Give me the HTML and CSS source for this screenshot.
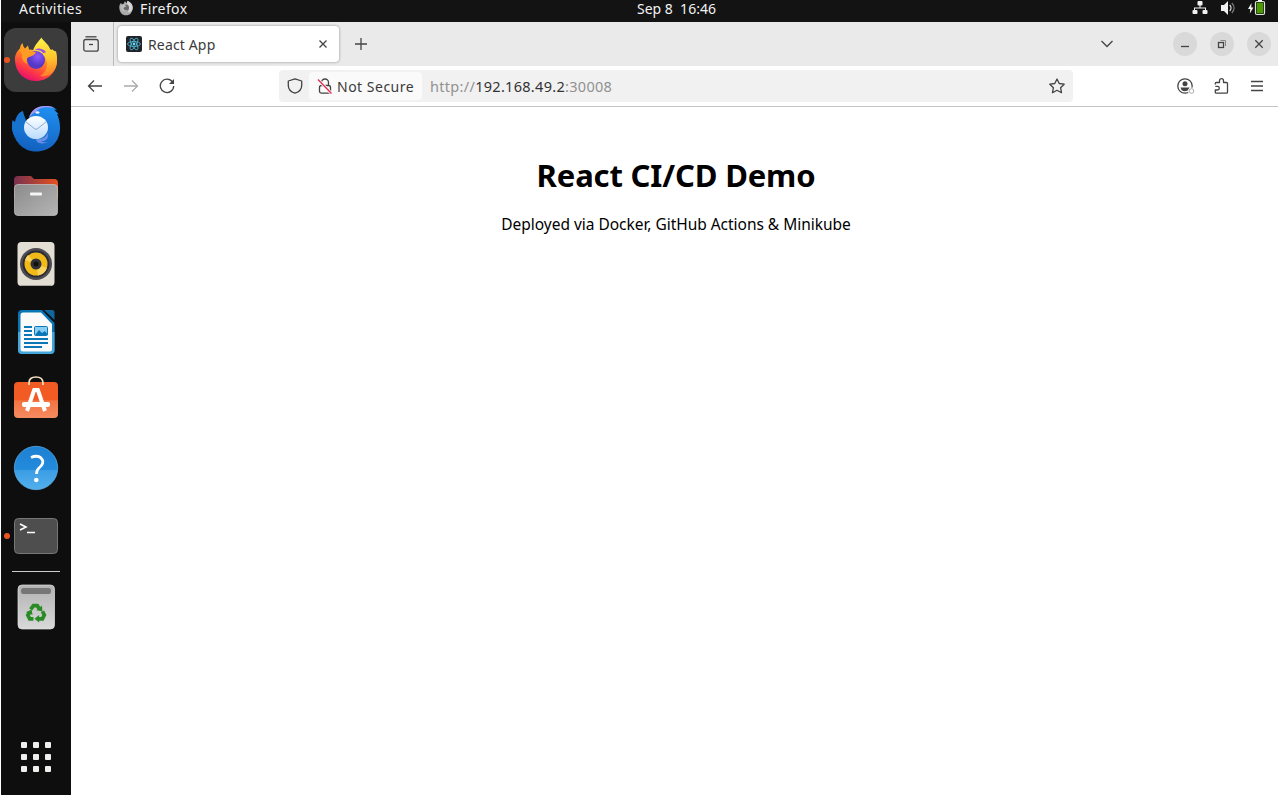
FILE: index.html
```html
<!DOCTYPE html>
<html lang="en">
<head>
<meta charset="utf-8">
<title>React App</title>
<link rel="stylesheet" href="styles.css">
</head>
<body>
<div class="desktop">
  <header class="topbar">
    <span class="activities">Activities</span>
    <span class="app-menu">
      <svg width="16" height="16" viewBox="0 0 48 48"><path fill="#aaa" d="M4 24C3 17 6 12 9 9l2 5 5-2 5-8 5 6 3-8c8 5 15 10 15 21C44 36 36 46 24 46S5 37 4 24Z"/><path fill="#d5d5d5" d="M29 2c8 5 15 10 15 21 0 8-7 15-15 14 7-8 4-22-3-27Z"/><circle cx="24" cy="23" r="9" fill="#686868"/><path fill="#bbb" d="M9 9l2 5 7-1 7 6-9 5c2 7 8 9 14 6-8 9-23 2-22-9Z"/></svg>
      <span class="app-name">Firefox</span>
    </span>
    <time class="clock">Sep 8&nbsp; 16:46</time>
    <div class="status">
      <svg width="16" height="16" viewBox="0 0 16 16" fill="#f2f2f2"><rect x="5.500" y="1" width="5" height="4.500" rx="1"/><rect x=".5" y="10" width="5" height="4" rx="1"/><rect x="10.500" y="10" width="5" height="4" rx="1"/><path d="M7.500 5h1v2.500H14V10h-1V8.500H3V10H2V7.500h5.500Z"/></svg>
      <svg width="16" height="16" viewBox="0 0 16 16"><path fill="#f2f2f2" d="M1 5h3l4-4v14l-4-4H1Z"/><path fill="none" stroke="#ddd" stroke-width="1.300" d="M9.700 5c1.700 1.700 1.700 4.300 0 6"/><path fill="none" stroke="#777" stroke-width="1.300" d="M11.800 3c3 3 3 7 0 10"/></svg>
      <svg width="18" height="16" viewBox="0 0 18 16"><path fill="#f2f2f2" d="M3.500 3 0 9h2.300l-.5 4.500L5.500 7.500H3.300Z"/><rect x="7.500" y="1.500" width="9" height="13" rx="1.500" fill="#4e9a06" stroke="#f2f2f2" stroke-width="1.200"/><path stroke="#111" stroke-width=".7" fill="none" d="M8.400 2.400h7.200v11.200H8.400Z"/><path fill="#f2f2f2" d="M10 0h4v2h-4Z"/></svg>
    </div>
  </header>
  <div class="workspace">
    <nav class="dock">
      <div class="dock-item active running">
        <svg width="48" height="48" viewBox="0 0 48 48">
          <defs>
            <linearGradient id="ff" x1=".8" y1=".1" x2=".3" y2="1"><stop offset="0" stop-color="#ffe03a"/><stop offset=".4" stop-color="#ff8a1f"/><stop offset=".72" stop-color="#ff3b45"/><stop offset="1" stop-color="#e30b72"/></linearGradient>
            <linearGradient id="fy" x1=".5" y1="0" x2=".6" y2="1"><stop offset="0" stop-color="#fff34a"/><stop offset=".55" stop-color="#ffc42c"/><stop offset="1" stop-color="#ff7b2b"/></linearGradient>
            <radialGradient id="fp" cx=".6" cy=".3"><stop offset="0" stop-color="#9059ff"/><stop offset="1" stop-color="#5539c5"/></radialGradient>
          </defs>
          <path fill="url(#ff)" d="M3 25c-.5-6 2-10 5-12.500 0-2 1-4 2.500-5.500.3 2 1 4 2.500 5.500L16 9.500l1 4c4 0 8 1 11 2l8-3 8 3c1 3 1 6 1 9C45 36 36 45 24 45S4 37 3 25Z"/>
          <path fill="url(#fy)" d="M29.500 1.500c1 3 8 7 9 13l.5 1.500 1-3C44 17 45 21 45 26c-1 10-9 16-17 14 5-3 8-8 7-14-1-5-5-9-14-11 1-5 5-9 8.500-13.500Z"/>
          <circle cx="24" cy="24" r="9" fill="url(#fp)"/>
          <path fill="#9752eb" d="M20 15c5-2 9-1 11 2l3-.5c-1-3-5-4-8-4Z"/>
          <path fill="#ff9b22" d="M7 13c3-1 7 0 10 3h7c-1 3-4 4-7 5-3 1-3 4-1 7-6-2-6-6-6-10Z"/>
        </svg>
      </div>
      <div class="dock-item">
        <svg width="48" height="48" viewBox="0 0 48 48">
          <defs><linearGradient id="tb" x1=".6" y1="0" x2=".4" y2="1"><stop offset="0" stop-color="#208ff0"/><stop offset="1" stop-color="#1260be"/></linearGradient><linearGradient id="te" x2="0" y2="1"><stop offset="0" stop-color="#fff"/><stop offset="1" stop-color="#b9dcff"/></linearGradient></defs>
          <path fill="#1673ce" d="M0 20c0-2 .5-3 .5-4L3 18c1-6 4-10 8-11 1 6 4 8 3 14L9 39C3 35-1 28 0 20Z"/>
          <path fill="url(#tb)" d="M17 14C19 6 26 2 33 2c5 0 9 1 12 4l-3-.5 5 5-2-.5c2 4 3 9 3 14 0 14-10 23.500-24 23.500C11 47.500 1 37 0 22c4 10 12 5 17-8Z"/>
          <path fill="#a795f5" d="M17 14C19 6 25 2 33 2c4 0 7 0 9 2-9-2-16 0-18 4-3 1-5 3-7 6Z"/>
          <path fill="#6d91e6" d="M24 35c6 1 10-2 12-6 1 6-3 9-8 8 2 1 5 2 8 1-6 3-12 1-12-3Z"/>
          <ellipse cx="24" cy="23.500" rx="12" ry="11.500" fill="url(#te)"/>
          <path d="m14 18 9 7q1 .8 2 0l9-7" fill="none" stroke="#90a9ce" stroke-width="1"/><ellipse cx="25.500" cy="8.500" rx="2" ry="1.200" fill="#e6f4ff"/>
        </svg>
      </div>
      <div class="dock-item">
        <svg width="48" height="48" viewBox="0 0 48 48">
          <defs><linearGradient id="fo"><stop offset="0" stop-color="#77304f"/><stop offset="1" stop-color="#e7521f"/></linearGradient><linearGradient id="fg" x2="1" y2="1"><stop offset="0" stop-color="#8b8b8b"/><stop offset="1" stop-color="#b5b5b5"/></linearGradient></defs>
          <path fill="url(#fo)" d="M2 8q0-4 4-4h13l3 3h20q4 0 4 4v15H2Z"/><rect x="2.500" y="12.500" width="43" height="31" rx="3.500" fill="url(#fg)" stroke="#c7c7c7" stroke-opacity=".7"/><rect x="18" y="20.500" width="12" height="3" rx="1" fill="#f5f5f5"/>
        </svg>
      </div>
      <div class="dock-item">
        <svg width="48" height="48" viewBox="0 0 48 48"><rect x="5.500" y="2" width="37" height="44" rx="4" fill="#e3ded3"/><path d="M9 45.500h30" stroke="#aaa69d"/><circle cx="24" cy="24" r="16" fill="#4f4b52"/><circle cx="24" cy="24" r="13.500" fill="#292b38"/><circle cx="24" cy="24" r="11.500" fill="#f0bb18"/><path fill="#fbd35a" d="m24 24-11-4a11.500 11.500 0 0 1 3-5Zm0 0 11 4a11.500 11.500 0 0 1-9 7.500Z"/><circle cx="24" cy="24" r="5.500" fill="#303136"/><circle cx="24" cy="24" r="2.500" fill="#111"/></svg>
      </div>
      <div class="dock-item">
        <svg width="48" height="48" viewBox="0 0 48 48"><path fill="#0875b5" d="M6 6q0-4 4-4h20l12.500 13v27q0 4-4 4H10q-4 0-4-4Z"/><path fill="#43a5d9" d="M6 24h36.500v18q0 4-4 4H10q-4 0-4-4Z"/><path fill="#fafafa" d="M8.500 7q0-2.500 2.500-2.500h18L40 16v25q0 2.500-2.500 2.500H11q-2.500 0-2.500-2.500Z"/><path fill="#11679b" d="M32 2h8q2.500 0 2.500 2.500V12Z"/><path stroke="#0b77b6" stroke-width="2" d="M12 19h8M12 23h8M12 27h8M12 31h24M12 35h24M12 39h18"/><rect x="22.500" y="18.500" width="13" height="9" rx="1" fill="#8bcdf0" stroke="#087abb"/><path fill="#0875b5" d="m23 27 4-5 3 3 3-2 3 4Z"/></svg>
      </div>
      <div class="dock-item">
        <svg width="48" height="48" viewBox="0 0 48 48"><defs><linearGradient id="so" x2="0" y2="1"><stop offset="0" stop-color="#f35b25"/><stop offset=".5" stop-color="#f35b25"/><stop offset=".52" stop-color="#f27441"/><stop offset="1" stop-color="#f68b60"/></linearGradient></defs><rect x="2" y="6" width="44" height="36" rx="4" fill="url(#so)"/><path d="M17 9V7q0-6 7-6t7 6v2" fill="none" stroke="#f3dec0" stroke-width="1.700"/><path d="m22.500 13-7.500 22M25.500 13l7.500 22" fill="none" stroke="#fff" stroke-width="4"/><path d="M21 12h6v4h-6Z" fill="#fff"/><rect x="10" y="26" width="28" height="5" rx="2" fill="#fff"/></svg>
      </div>
      <div class="dock-item">
        <svg width="48" height="48" viewBox="0 0 48 48"><defs><linearGradient id="he" x2="0" y2="1"><stop offset="0" stop-color="#1e80d2"/><stop offset=".54" stop-color="#238bdc"/><stop offset=".55" stop-color="#3b9de4"/><stop offset="1" stop-color="#52b0ec"/></linearGradient></defs><circle cx="24" cy="24" r="21.700" fill="url(#he)" stroke="#61b5ee" stroke-width=".7"/><path d="M19 13.500q5.500-2.500 9.500 0c4.500 4 1.500 8-1.500 10.500-2 1.700-2.500 3-2.500 6" fill="none" stroke="#fff" stroke-width="2.800"/><circle cx="24.300" cy="36" r="2.300" fill="#fff"/></svg>
      </div>
      <div class="dock-item running">
        <svg width="48" height="48" viewBox="0 0 48 48"><rect x="2.500" y="6.500" width="43" height="35" rx="4" fill="#4e4e4e" stroke="#777"/><path d="m8 12 6 3-6 3M15 20.500h8" fill="none" stroke="#fff" stroke-width="1.600"/></svg>
      </div>
      <div class="dock-divider"></div>
      <div class="dock-item">
        <svg width="48" height="48" viewBox="0 0 48 48"><defs><linearGradient id="tr" x2="0" y2="1"><stop offset="0" stop-color="#b2b2b2"/><stop offset="1" stop-color="#d9d9d9"/></linearGradient></defs><rect x="6" y="2" width="36.500" height="44" rx="4" fill="url(#tr)" stroke="#e1e1e1" stroke-width=".7"/><rect x="9" y="5" width="30" height="6" rx="2.500" fill="#767676"/>
          <g transform="translate(.8 1) scale(.94)"><g fill="none" stroke="#298b25" stroke-width="4"><path d="m19 27 3-4h4l2 3"/><path d="m31.500 29 2 4-2 4H27"/><path d="M22 37h-4l-2-4 2-3"/></g><g fill="#298b25"><path d="m25 28 6-5 .5 6Z"/><path d="m28 33-5 4 5 4Z"/><path d="m14 30 6-3 1 6Z"/></g></g></svg>
      </div>
      <div class="dock-item apps"><svg width="48" height="48" viewBox="0 0 48 48" fill="#efefee"><rect x="9" y="9" width="6" height="6" rx="1"/><rect x="21" y="9" width="6" height="6" rx="1"/><rect x="33" y="9" width="6" height="6" rx="1"/><rect x="9" y="21" width="6" height="6" rx="1"/><rect x="21" y="21" width="6" height="6" rx="1"/><rect x="33" y="21" width="6" height="6" rx="1"/><rect x="9" y="33" width="6" height="6" rx="1"/><rect x="21" y="33" width="6" height="6" rx="1"/><rect x="33" y="33" width="6" height="6" rx="1"/></svg></div>
    </nav>
    <main class="window">
      <div class="tabs">
        <div class="tab-overview"><svg class="line-icon" width="16" height="16" viewBox="0 0 16 16"><path d="M2.500.8h11"/><rect x=".8" y="3.500" width="14.400" height="11.700" rx="2"/><path d="M6 8.500h4"/></svg></div>
        <div class="tab">
          <svg width="16" height="16" viewBox="0 0 16 16"><rect width="16" height="16" rx="2" fill="#20232a"/><g fill="none" stroke="#53bdd6" stroke-width=".8"><ellipse cx="8" cy="8" rx="6.500" ry="2.500"/><ellipse cx="8" cy="8" rx="6.500" ry="2.500" transform="rotate(60 8 8)"/><ellipse cx="8" cy="8" rx="6.500" ry="2.500" transform="rotate(120 8 8)"/></g><circle cx="8" cy="8" r="1.400" fill="#61dafb"/></svg>
          <span class="tab-title">React App</span>
          <svg class="line-icon" width="8" height="8" viewBox="0 0 8 8"><path d="m.5.5 7 7m0-7-7 7"/></svg>
        </div>
        <svg class="line-icon new-tab" width="12" height="12" viewBox="0 0 12 12"><path d="M6 0v12M0 6h12"/></svg>
        <svg class="line-icon tab-list" width="12" height="8" viewBox="0 0 12 8"><path d="m.5 1 5.500 5.500L11.500 1"/></svg>
        <div class="controls">
          <span class="control"><svg class="line-icon" width="12" height="12" viewBox="0 0 12 12"><path d="M2 8.500h8"/></svg></span>
          <span class="control"><svg class="line-icon" width="12" height="12" viewBox="0 0 12 12"><rect x="2.500" y="4.500" width="5" height="5"/><path class="back-pane" d="M4.500 2.500h5V8"/></svg></span>
          <span class="control"><svg class="line-icon" width="12" height="12" viewBox="0 0 12 12"><path d="m2.300 2.300 7.400 7.400m0-7.400-7.400 7.400"/></svg></span>
        </div>
      </div>
      <div class="toolbar">
        <div class="nav-buttons">
          <svg class="line-icon" width="16" height="16" viewBox="0 0 16 16"><path d="M15 8H1.500M7 2.500 1.500 8 7 13.500"/></svg>
          <svg class="line-icon disabled" width="16" height="16" viewBox="0 0 16 16"><path d="M1 8h13.500M9 2.500 14.500 8 9 13.500"/></svg>
          <svg class="line-icon" width="16" height="16" viewBox="0 0 16 16"><path d="M13.500 4A6.700 6.700 0 1 0 14.700 8"/><path fill="#444" stroke="none" d="m15 1v5H10Z"/></svg>
        </div>
        <div class="url-bar">
          <svg class="line-icon shield" width="16" height="16" viewBox="0 0 16 16"><path d="M8 .8 14.700 3v4.500C14.700 11 12 14 8 15.200 4 14 1.300 11 1.300 7.500V3Z" stroke-linejoin="round"/></svg>
          <div class="identity"><svg width="16" height="16" viewBox="0 0 16 16"><g class="line-icon"><rect x="2.500" y="7.500" width="11" height="7.700" rx="2"/><path d="M4.500 7V4.500a3.500 3.500 0 0 1 7 0V7"/></g><path d="m.5 1 14 14.500" stroke="#fafafa" stroke-width="3"/><path d="m1 1.500 13.500 14" stroke="#e22850" stroke-width="1.300"/></svg><span class="insecure">Not Secure</span></div>
          <span class="url">http://<b>192.168.49.2</b>:30008</span>
          <svg class="line-icon star" width="16" height="16" viewBox="0 0 16 16"><path stroke-linejoin="round" d="m8 1 2.200 4.500 5 .7-3.600 3.500.9 5L8 12.300 3.500 14.700l.9-5L.8 6.200l5-.7Z"/></svg>
        </div>
        <div class="actions">
          <svg width="18" height="16" viewBox="0 0 18 16"><circle class="line-icon" cx="8" cy="8" r="7.200"/><circle cx="8" cy="5.700" r="2.500" fill="#444"/><path fill="#444" d="M3.500 9.500h9v1.500q-4 4-8 1Z"/><circle cx="14.500" cy="13" r="3.500" fill="#fff"/><circle cx="14.500" cy="13" r="2.300" fill="none" stroke="#aaa"/></svg>
          <svg class="line-icon" width="16" height="16" viewBox="0 0 16 16"><path stroke-linejoin="round" d="M2.300 6.500V5.500q0-1 1-1h3.200V2.700a2 2 0 0 1 4 0v1.800h3q1 0 1 1v8.700q0 1-1 1H3.300q-1 0-1-1V12h2.200a1.800 1.800 0 0 0 0-3.600H2.300"/></svg>
          <svg class="line-icon menu" width="12" height="12" viewBox="0 0 12 12"><path d="M0 1.500h12M0 6h12M0 10.500h12"/></svg>
        </div>
      </div>
      <section class="page">
        <h1><span class="heading">React CI/CD Demo</span></h1>
        <p><span class="lead">Deployed via Docker, GitHub Actions &amp; Minikube</span></p>
      </section>
    </main>
  </div>
</div>
</body>
</html>
```
FILE: styles.css
```css
* { box-sizing: border-box; }
body { margin: 0; background: #fff; font-family: "Noto Sans", "Open Sans", sans-serif; }
svg { display: block; flex: none; }
.desktop { display: flex; flex-direction: column; width: 1278px; height: 795px; padding-left: 1px; overflow: hidden; }
.topbar { display: grid; grid-template-columns: 117px 519px 1fr auto; grid-template-rows: 18px; align-items: center; height: 22px; padding: 0 12px 4px 0; background: #131313; color: #f2f2f2; font-size: 14px; line-height: 18px; white-space: nowrap; }
.activities { padding-left: 18px; letter-spacing: .48px; }
.app-name { letter-spacing: .4px; }
.app-menu { display: flex; align-items: center; gap: 6px; }
.app-menu svg, .status { margin-bottom: 2px; }
.status { display: flex; gap: 12px; }
.workspace { display: flex; flex: 1; min-height: 0; }
.dock { display: flex; flex: none; flex-direction: column; align-items: center; gap: 4px; width: 70px; padding: 6px 0; background: #0e0e0e; }
.dock-item { position: relative; display: flex; align-items: center; justify-content: center; flex: none; width: 64px; height: 64px; border-radius: 12px; }
.active { background: #3c3c3c; }
.running::before { content: ""; position: absolute; left: 0; top: 29px; width: 6px; height: 6px; border-radius: 50%; background: #e95420; }
.dock-divider { flex: none; width: 48px; height: 1px; margin: -1px 0; background: #ccc; }
.apps { margin-top: auto; }
.window { display: flex; flex: 1; flex-direction: column; background: #fff; color: #3b3b3b; }
.tabs { display: flex; align-items: center; flex: none; height: 44px; padding-right: 7px; background: #eaeaea; }
.tab-overview { display: flex; align-items: center; justify-content: center; width: 43px; height: 44px; padding-right: 2px; border-right: 1px solid #bbb; }
.tab { display: flex; align-items: center; width: 221px; height: 36px; margin-left: 4px; padding: 0 12px 0 8px; border-radius: 4px; background: #fff; box-shadow: 0 0 3px rgba(0, 0, 0, .4); font-size: 14px; }
.tab-title { flex: 1; padding-left: 6px; letter-spacing: .15px; }
.new-tab { margin-left: 16px; }
.tab-list { margin-left: auto; }
.controls { display: flex; gap: 13px; margin-left: 60px; }
.control { display: flex; align-items: center; justify-content: center; width: 24px; height: 24px; border-radius: 50%; background: #d9d9d9; }
.line-icon { fill: none; stroke: #444; stroke-width: 1.3; }
.back-pane { stroke: #888; stroke-width: 1; }
.disabled { stroke: #aaa; }
.toolbar { display: flex; align-items: center; flex: none; height: 41px; padding: 0 15px 0 16px; border-bottom: 1px solid #c4c4c4; background: #fff; }
.nav-buttons { display: flex; gap: 20px; }
.url-bar { display: flex; align-items: center; width: 794px; height: 32px; margin-left: 104px; padding: 0 8px; border-radius: 4px; background: #f1f1f1; font-size: 14px; white-space: nowrap; }
.identity { display: flex; align-items: center; gap: 4px; width: 113px; height: 28px; margin-left: 6px; padding-left: 8px; border-radius: 4px; background: #fafafa; }
.insecure { letter-spacing: .5px; }
.url { padding-left: 8px; color: #929292; font-size: 14.5px; letter-spacing: .3px; }
.url b { color: #333; font-weight: 400; }
.star { margin-left: auto; }
.actions { display: flex; align-items: center; gap: 18px; margin-left: auto; }
.menu { margin-left: 4px; }
.page { flex: 1; padding: 50px 0 0 3px; color: #000; text-align: center; }
h1 { margin: 0; font-size: 31px; font-weight: 700; line-height: 37px; letter-spacing: -.15px; }
p { margin: 21px 0 0; font-size: 15.5px; line-height: 18px; letter-spacing: -.03px; }
```
